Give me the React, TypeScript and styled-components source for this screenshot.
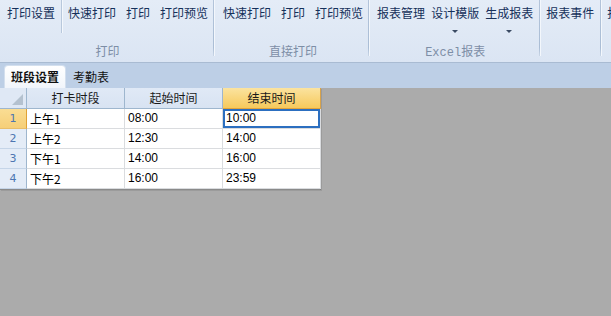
import React from "react";
import styled, { createGlobalStyle, css } from "styled-components";

const GlobalStyle = createGlobalStyle`
  html, body {
    margin: 0;
    padding: 0;
    width: 611px;
    height: 316px;
    overflow: hidden;
    background: #ababab;
    font-family: "Liberation Sans", "Noto Sans CJK SC", sans-serif;
  }
`;

const Page = styled.div`
  display: flex;
  flex-direction: column;
  width: 611px;
  height: 316px;
  background: #ababab;
`;

const Ribbon = styled.div`
  display: flex;
  flex: 0 0 63px;
  box-sizing: border-box;
  height: 63px;
  background: linear-gradient(#e4ecf7, #dbe5f3);
  border-bottom: 1px solid #a9bbd2;
  overflow: hidden;
`;

const Group = styled.div<{ $padL: number; $padR?: number }>`
  display: flex;
  flex-direction: column;
  flex-shrink: 0;
  padding-left: ${(p) => p.$padL}px;
  padding-right: ${(p) => p.$padR ?? 0}px;
`;

const Buttons = styled.div`
  display: flex;
  flex: 0 0 44px;
`;

const Btn = styled.div<{ $pad: number }>`
  display: flex;
  flex-direction: column;
  align-items: center;
  padding: 5px ${(p) => p.$pad}px 0;
  font-family: "Noto Sans CJK SC", sans-serif;
  font-size: 12px;
  line-height: 16px;
  color: #15305a;
  white-space: nowrap;
`;

const Caret = styled.span`
  margin-top: 9px;
  width: 0;
  height: 0;
  border-left: 3px solid transparent;
  border-right: 3px solid transparent;
  border-top: 3px solid #3a4a63;
`;

const SmallSep = styled.div`
  width: 1px;
  height: 33px;
  margin: 0 1px;
  background: #b8c8dc;
  box-shadow: 1px 0 0 #f3f7fc;
`;

const GroupLabel = styled.div`
  margin-top: auto;
  padding-bottom: 2px;
  text-align: center;
  font-family: "Liberation Mono", "Noto Sans CJK SC", monospace;
  font-size: 12px;
  line-height: 14px;
  color: #7d8ea6;
`;

const GroupSep = styled.div`
  width: 1px;
  height: 56px;
  flex-shrink: 0;
  background: linear-gradient(#b3c4da, #aabdd5 85%, #c9d6e6);
  box-shadow: 1px 0 0 #f3f7fc;
`;

const TabStrip = styled.div`
  display: flex;
  flex: 0 0 25px;
  align-items: flex-end;
  height: 25px;
  padding-left: 5px;
  background: #bdcfe6;
  gap: 2px;
`;

const Tab = styled.div<{ $active?: boolean }>`
  height: 22px;
  padding: 0 6px;
  font-family: "Noto Sans CJK SC", sans-serif;
  font-size: 12px;
  line-height: 22px;
  color: #111;
  border-radius: 3px 3px 0 0;
  ${(p) =>
    p.$active &&
    css`
      font-weight: bold;
      background: linear-gradient(#ffffff, #f1f5fb);
      box-shadow: 0 0 0 1px #d3dfee;
    `}
`;

const Content = styled.div`
  flex: 1;
  background: #ababab;
`;

const Grid = styled.div`
  display: grid;
  grid-template-columns: 27px 98px 98px 98px;
  grid-auto-rows: 20px;
  grid-template-rows: 21px;
  width: 321px;
  background: #fff;
  border-right: 1px solid #6d6d6d;
  border-bottom: 1px solid #8a8a8a;
  box-sizing: border-box;
  box-shadow: 1px 1px 0 #9b9b9b;
`;

const Corner = styled.div`
  position: relative;
  background: #dfe8f5;
  border-right: 1px solid #9eb6ce;
  border-bottom: 1px solid #9eb6ce;
  box-sizing: border-box;
  &::after {
    content: "";
    position: absolute;
    right: 3px;
    bottom: 3px;
    width: 0;
    height: 0;
    border-left: 11px solid transparent;
    border-bottom: 11px solid #b4c1cf;
  }
`;

const ColHead = styled.div<{ $sel?: boolean }>`
  box-sizing: border-box;
  text-align: center;
  font-family: "Noto Sans CJK SC", sans-serif;
  font-size: 12px;
  line-height: 20px;
  color: #1a1a1a;
  border-right: 1px solid #9eb6ce;
  border-bottom: 1px solid #9eb6ce;
  background: ${(p) =>
    p.$sel ? "linear-gradient(#fbe39f, #f6c95c)" : "linear-gradient(#e0e9f6, #d8e3f2)"};
  ${(p) =>
    p.$sel &&
    css`
      border-bottom-color: #e3a43a;
      border-right-color: #d7a24a;
    `}
`;

const RowHead = styled.div<{ $sel?: boolean }>`
  box-sizing: border-box;
  text-align: center;
  font-family: "DejaVu Sans", sans-serif;
  font-size: 11px;
  line-height: 19px;
  color: #4d76b1;
  border-right: 1px solid #9eb6ce;
  border-bottom: 1px solid #c5d5e8;
  background: ${(p) => (p.$sel ? "linear-gradient(#fadd94, #f6cf78)" : "#e4ecf7")};
  ${(p) =>
    p.$sel &&
    css`
      border-right-color: #e0a236;
      border-bottom-color: #e9be6a;
    `}
`;

const Cell = styled.div<{ $sel?: boolean; $cjk?: boolean }>`
  box-sizing: border-box;
  padding-left: 3px;
  font-family: ${(p) =>
    p.$cjk ? `"Noto Sans CJK SC", sans-serif` : `"Liberation Sans", sans-serif`};
  font-size: 12px;
  line-height: 19px;
  color: #000;
  background: #fff;
  border-right: 1px solid #dadcdf;
  border-bottom: 1px solid #dadcdf;
  white-space: nowrap;
  ${(p) =>
    p.$sel &&
    css`
      box-shadow: inset 0 0 0 2px #2c6fc0;
    `}
`;

const rows = [
  ["上午1", "08:00", "10:00"],
  ["上午2", "12:30", "14:00"],
  ["下午1", "14:00", "16:00"],
  ["下午2", "16:00", "23:59"],
];

export default function App() {
  return (
    <Page>
      <GlobalStyle />
      <Ribbon>
        <Group $padL={2}>
          <Buttons>
            <Btn $pad={5}>打印设置</Btn>
            <SmallSep />
            <Btn $pad={5}>快速打印</Btn>
            <Btn $pad={5}>打印</Btn>
            <Btn $pad={5}>打印预览</Btn>
          </Buttons>
          <GroupLabel>打印</GroupLabel>
        </Group>
        <GroupSep />
        <Group $padL={4}>
          <Buttons>
            <Btn $pad={5}>快速打印</Btn>
            <Btn $pad={5}>打印</Btn>
            <Btn $pad={5}>打印预览</Btn>
          </Buttons>
          <GroupLabel>直接打印</GroupLabel>
        </Group>
        <GroupSep />
        <Group $padL={5} $padR={3}>
          <Buttons>
            <Btn $pad={3}>报表管理</Btn>
            <Btn $pad={3}>
              设计模版
              <Caret />
            </Btn>
            <Btn $pad={3}>
              生成报表
              <Caret />
            </Btn>
          </Buttons>
          <GroupLabel>Excel报表</GroupLabel>
        </Group>
        <GroupSep />
        <Group $padL={0} $padR={0}>
          <Buttons>
            <Btn $pad={6}>报表事件</Btn>
          </Buttons>
          <GroupLabel>&nbsp;</GroupLabel>
        </Group>
        <GroupSep />
        <Group $padL={0}>
          <Buttons>
            <Btn $pad={6}>报表设计</Btn>
          </Buttons>
        </Group>
      </Ribbon>
      <TabStrip>
        <Tab $active>班段设置</Tab>
        <Tab>考勤表</Tab>
      </TabStrip>
      <Content>
        <Grid>
          <Corner />
          <ColHead>打卡时段</ColHead>
          <ColHead>起始时间</ColHead>
          <ColHead $sel>结束时间</ColHead>
          {rows.map((r, i) => (
            <React.Fragment key={i}>
              <RowHead $sel={i === 0}>{i + 1}</RowHead>
              <Cell $cjk>{r[0]}</Cell>
              <Cell>{r[1]}</Cell>
              <Cell $sel={i === 0}>{r[2]}</Cell>
            </React.Fragment>
          ))}
        </Grid>
      </Content>
    </Page>
  );
}
